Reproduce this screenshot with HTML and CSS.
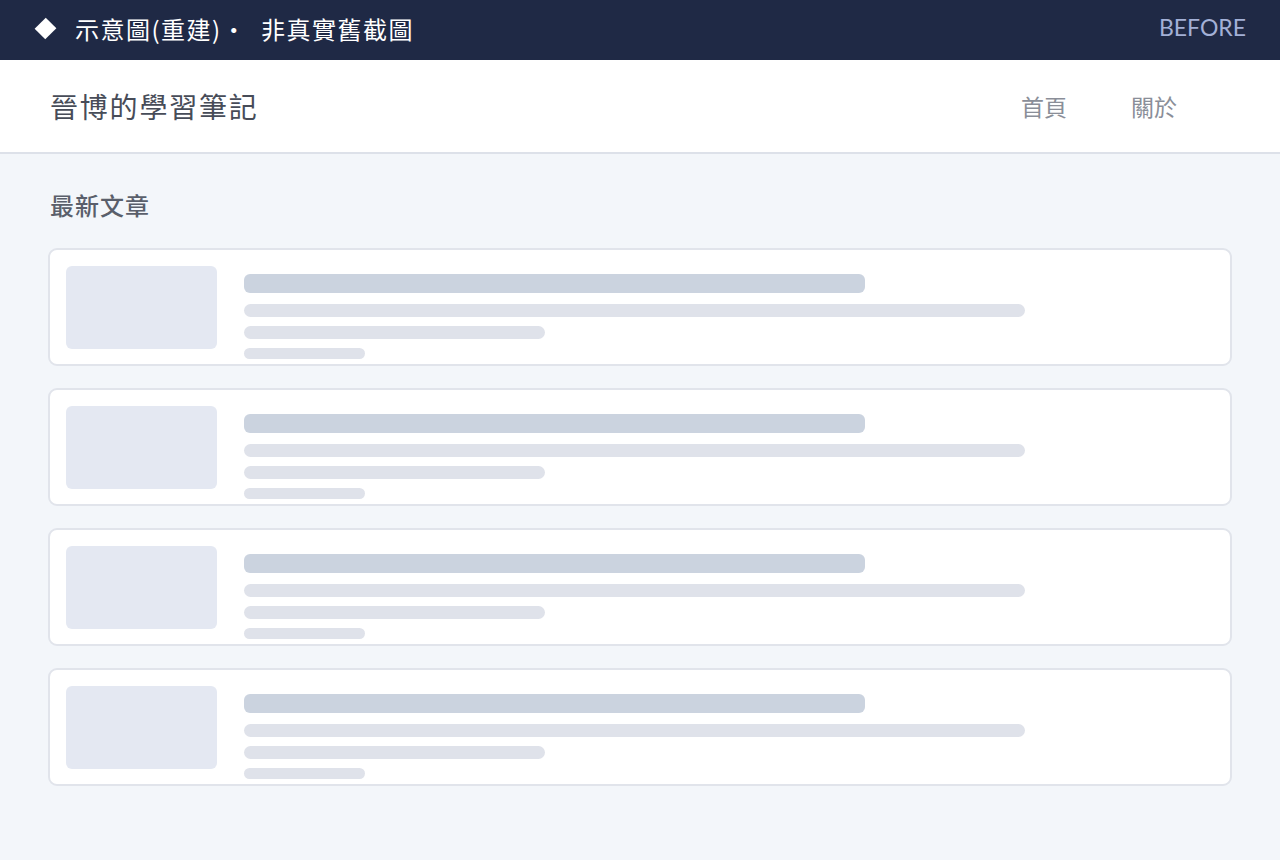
FILE: index.html
```html
<!DOCTYPE html>
<html lang="zh-Hant">
<head>
  <meta charset="UTF-8" />
  <meta name="viewport" content="width=device-width, initial-scale=1.0"/>
  <title>晉博的學習筆記</title>
  <link rel="stylesheet" href="styles.css">
</head>
<body>
  <div class="topbar">
    <div class="topbar-title">
      <span class="diamond"></span>
      <span>示意圖(重建)·&nbsp;&nbsp;非真實舊截圖</span>
    </div>
    <div class="topbar-tag">BEFORE</div>
  </div>

  <header class="site-header">
    <div class="site-title">晉博的學習筆記</div>
    <nav class="site-nav">
      <a>首頁</a>
      <a>關於</a>
    </nav>
  </header>

  <main class="content">
    <h2 class="section-title">最新文章</h2>

    <div class="post-list">
      <div class="post-card">
        <div class="thumb"></div>
        <div class="lines">
          <div class="line line-title"></div>
          <div class="line line-long"></div>
          <div class="line line-mid"></div>
          <div class="line line-short"></div>
        </div>
      </div>
      <div class="post-card">
        <div class="thumb"></div>
        <div class="lines">
          <div class="line line-title"></div>
          <div class="line line-long"></div>
          <div class="line line-mid"></div>
          <div class="line line-short"></div>
        </div>
      </div>
      <div class="post-card">
        <div class="thumb"></div>
        <div class="lines">
          <div class="line line-title"></div>
          <div class="line line-long"></div>
          <div class="line line-mid"></div>
          <div class="line line-short"></div>
        </div>
      </div>
      <div class="post-card">
        <div class="thumb"></div>
        <div class="lines">
          <div class="line line-title"></div>
          <div class="line line-long"></div>
          <div class="line line-mid"></div>
          <div class="line line-short"></div>
        </div>
      </div>
    </div>
  </main>
</body>
</html>
```

FILE: styles.css
```css
body {
  margin: 0;
  background: #f3f6fa;
  font-family: "Noto Sans CJK TC", "Noto Sans", sans-serif;
}

.topbar {
  height: 60px;
  box-sizing: border-box;
  background: #1f2945;
  display: flex;
  align-items: center;
  justify-content: space-between;
  padding: 0 34px 6px 38px;
}

.topbar-title {
  display: flex;
  align-items: center;
  color: #ffffff;
  font-size: 24px;
  letter-spacing: 1.5px;
  padding-top: 3px;
}

.diamond {
  width: 15px;
  height: 15px;
  background: #ffffff;
  transform: rotate(45deg) scaleY(1.05);
  margin-right: 22px;
}

.topbar-tag {
  font-family: Lato, "Noto Sans", sans-serif;
  color: #a3b0d6;
  font-size: 23px;
}

.site-header {
  height: 92px;
  background: #ffffff;
  border-bottom: 2px solid #dde1e9;
  display: flex;
  align-items: center;
  justify-content: space-between;
  padding: 0 103px 0 50px;
}

.site-title {
  font-size: 28px;
  color: #474c58;
  letter-spacing: 1.8px;
}

.site-nav {
  display: flex;
  gap: 64px;
}

.site-nav a {
  font-size: 23px;
  color: #8a8e98;
  cursor: pointer;
}

.content {
  padding: 0 48px;
}

.section-title {
  margin: 0;
  padding: 33px 0 0 2px;
  height: 61px;
  font-size: 24px;
  font-weight: 500;
  color: #5a5f6b;
  letter-spacing: 1px;
}

.post-list {
  display: flex;
  flex-direction: column;
  gap: 22px;
}

.post-card {
  height: 118px;
  box-sizing: border-box;
  background: #ffffff;
  border: 2px solid #e1e4eb;
  border-radius: 9px;
  padding: 16px;
  display: flex;
  align-items: flex-start;
}

.thumb {
  width: 151px;
  height: 83px;
  background: #e4e8f2;
  border-radius: 6px;
  flex-shrink: 0;
}

.lines {
  margin-left: 27px;
  padding-top: 8px;
  display: flex;
  flex-direction: column;
}

.line {
  background: #dfe2ea;
  border-radius: 7px;
}

.line-title {
  width: 621px;
  height: 19px;
  background: #cbd3df;
  border-radius: 6px;
  margin-bottom: 11px;
}

.line-long {
  width: 781px;
  height: 13px;
  margin-bottom: 9px;
}

.line-mid {
  width: 301px;
  height: 13px;
  margin-bottom: 9px;
}

.line-short {
  width: 121px;
  height: 11px;
}
```
